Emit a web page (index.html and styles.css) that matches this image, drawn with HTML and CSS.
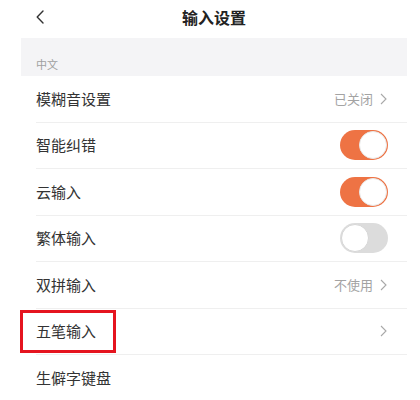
FILE: index.html
```html
<!DOCTYPE html>
<html lang="zh-CN">
<head>
<meta charset="utf-8">
<title>输入设置</title>
<link rel="stylesheet" href="styles.css">
</head>
<body>
<div class="page">
  <header class="header">
    <div class="back">
      <svg width="8" height="14" viewBox="0 0 8 14"><path d="M7 1 L1.2 7 L7 13" fill="none" stroke="#333" stroke-width="1.4" stroke-linecap="round" stroke-linejoin="round"/></svg>
    </div>
    <div class="title">输入设置</div>
    <div></div>
  </header>
  <div class="section">中文</div>
  <div class="list">
    <div class="row"><div class="inner"><span class="label">模糊音设置</span><span class="value">已关闭<svg class="chev" width="7" height="12" viewBox="0 0 7 12"><path d="M1 1 L6 6 L1 11" fill="none" stroke="#a8a8a8" stroke-width="1.1"/></svg></span></div></div>
    <div class="row"><div class="inner"><span class="label">智能纠错</span><span class="switch on"><span class="knob"></span></span></div></div>
    <div class="row"><div class="inner"><span class="label">云输入</span><span class="switch on"><span class="knob"></span></span></div></div>
    <div class="row"><div class="inner"><span class="label">繁体输入</span><span class="switch"><span class="knob"></span></span></div></div>
    <div class="row"><div class="inner"><span class="label">双拼输入</span><span class="value">不使用<svg class="chev" width="7" height="12" viewBox="0 0 7 12"><path d="M1 1 L6 6 L1 11" fill="none" stroke="#a8a8a8" stroke-width="1.1"/></svg></span></div></div>
    <div class="row marked"><div class="inner"><span class="label">五笔输入</span><span class="value"><svg class="chev" width="7" height="12" viewBox="0 0 7 12"><path d="M1 1 L6 6 L1 11" fill="none" stroke="#a8a8a8" stroke-width="1.1"/></svg></span></div><div class="highlight"></div></div>
    <div class="row"><div class="inner"><span class="label">生僻字键盘</span></div></div>
  </div>
</div>
</body>
</html>
```

FILE: styles.css
```css
html, body {
  margin: 0;
  padding: 0;
  background: #ffffff;
}
body {
  font-family: "Noto Sans CJK SC", "Noto Sans", sans-serif;
  color: #333333;
}
.page {
  margin-left: 21px;
  width: 386px;
}
.header {
  height: 38px;
  display: grid;
  grid-template-columns: 1fr auto 1fr;
  align-items: center;
}
.back {
  padding-left: 15px;
  display: flex;
  align-items: center;
  padding-bottom: 4px;
}
.title {
  font-size: 16px;
  font-weight: 700;
  color: #222222;
  line-height: 20px;
  padding-bottom: 4px;
}
.section {
  height: 38px;
  box-sizing: border-box;
  background: #f4f4f6;
  padding: 19px 0 0 15px;
  font-size: 11px;
  line-height: 14px;
  color: #a0a0a0;
}
.row {
  position: relative;
  padding-left: 15px;
}
.inner {
  height: 46.5px;
  box-sizing: border-box;
  border-bottom: 1px solid #efefef;
  display: flex;
  align-items: center;
  justify-content: space-between;
  padding-right: 19px;
}
.label {
  font-size: 15px;
  color: #333333;
  line-height: 20px;
}
.value {
  display: flex;
  align-items: center;
  gap: 7px;
  font-size: 13px;
  color: #a3a3a3;
  line-height: 18px;
}
.chev {
  display: block;
  margin-right: 1px;
}
.switch {
  width: 48px;
  height: 30px;
  border-radius: 15px;
  background: #dcdcdc;
  display: flex;
  align-items: center;
  padding: 1px;
  box-sizing: border-box;
}
.switch.on {
  background: #ee7344;
  justify-content: flex-end;
}
.knob {
  width: 28px;
  height: 28px;
  border-radius: 50%;
  background: #ffffff;
  box-sizing: border-box;
  border: 1px solid #d6d6d6;
}
.switch.on .knob {
  border-color: #e8e8e8;
}
.highlight {
  position: absolute;
  left: -1px;
  top: 1px;
  width: 96px;
  height: 43px;
  box-sizing: border-box;
  border: 3px solid #e5141f;
  pointer-events: none;
}
```
